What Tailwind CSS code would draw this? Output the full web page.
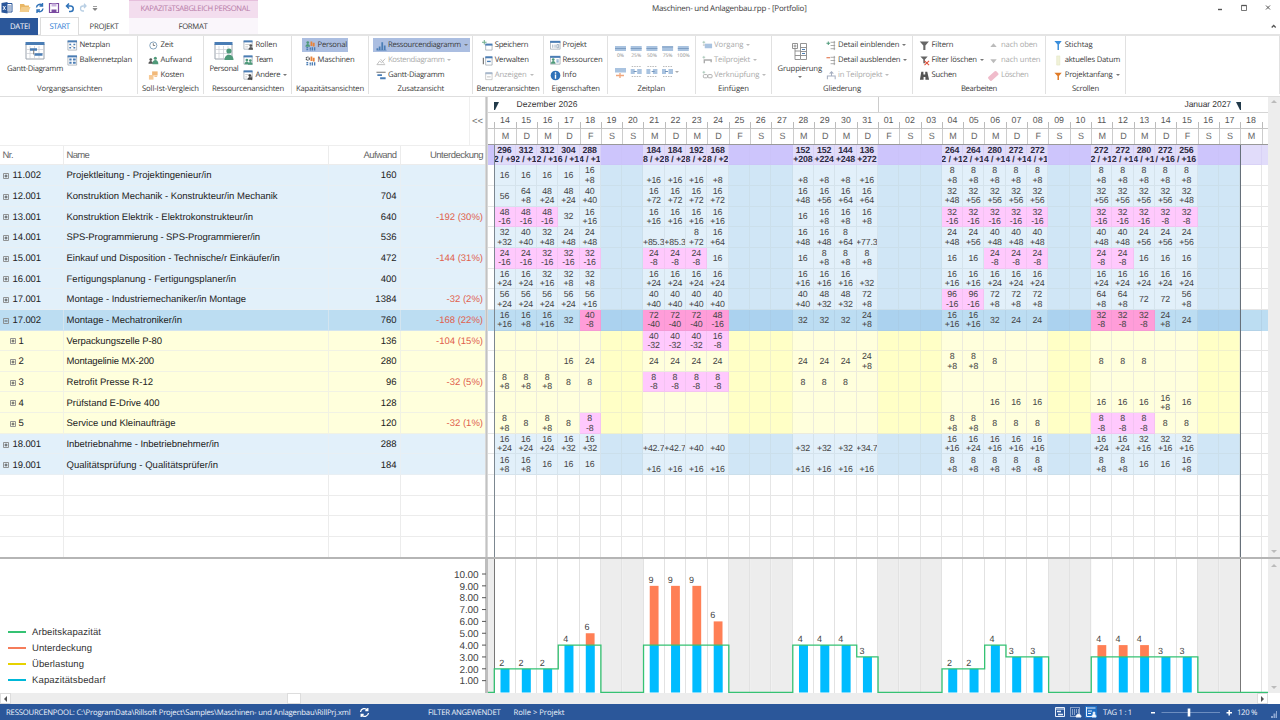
<!DOCTYPE html>
<html lang="de">
<head>
<meta charset="utf-8">
<title>Maschinen- und Anlagenbau.rpp - [Portfolio]</title>
<script src="https://cdn.jsdelivr.net/npm/@tailwindcss/browser@4"></script>
</head>
<body class="w-[1280px] h-[720px] overflow-hidden bg-white">
<div class="w-[1280px] h-[720px] flex flex-col overflow-hidden font-['Open_Sans','Noto_Sans',sans-serif] text-[7.7px] leading-none text-[#3c3c3c] whitespace-nowrap [text-rendering:geometricPrecision]">

  <!-- title bar and tabs -->
  <header class="h-9 shrink-0 flex border-b-2 border-[#e4e4e4] [&_[data-w]]:inline-block [&_[data-w]]:pt-[3px]">
    <div class="w-[129px] shrink-0 flex flex-col">
      <div class="h-[18px] flex items-center pl-[1px] pb-[2px]" id="quick"></div>
      <div class="h-4 flex items-center">
        <div class="w-[38px] h-[17px] bg-[#2b579a] text-white flex items-center pl-[10px]"><span data-w="20">DATEI</span></div>
        <div class="ml-[2px] w-[39px] h-[18px] bg-white border border-b-0 border-[#dcdcdc] flex items-center pl-[8.5px] pb-px text-[#2b7cd3] relative"><span data-w="20">START</span></div>
        <div class="ml-[10.5px]"><span data-w="29">PROJEKT</span></div>
      </div>
    </div>
    <div class="w-[129px] shrink-0 flex flex-col bg-[#faf6fb]">
      <div class="h-[18px] bg-[#f3ddee] border-t border-[#e6bfdc] flex items-center pb-[2px] pl-[11.5px] text-[#b67aa6]"><span data-w="109.5">KAPAZITäTSABGLEICH PERSONAL</span></div>
      <div class="h-4 flex items-center pl-[49.5px]"><span data-w="29">FORMAT</span></div>
    </div>
    <div class="flex-1 flex pl-[394px]">
      <div class="pt-[2px] text-[8px]"><span data-w="154.5" data-s="8">Maschinen- und Anlagenbau.rpp - [Portfolio]</span></div>
      <svg class="ml-auto w-[80px] h-[34px]" viewBox="0 0 80 34" fill="none" stroke="#555">
        <path d="M18 9.500h4" stroke-width="1.400"/><path d="M41.500 5.500h5v5h-5z" stroke-width=".8"/><path d="M41.500 5.500h5" stroke-width="1.300"/><path d="M66 5.500l4 4m0-4l-4 4" stroke-width="1"/><path d="M71.700 27.500l2-2 2 2" stroke-width="1.300"/>
      </svg>
    </div>
  </header>

  <!-- ribbon -->
  <section id="ribbon" class="h-[60px] shrink-0 flex [&_[data-w]]:inline-block [&_[data-w]]:pt-[3px]"></section>

  <!-- table and calendar -->
  <main class="h-[461px] shrink-0 flex border-t border-[#dedede] font-['Liberation_Sans',Arial,sans-serif]">
    <div class="w-[485px] shrink-0 flex flex-col text-[9.5px]" id="table">
      <div class="h-[47.600px] shrink-0 flex justify-end"><div class="w-4 pt-[2px] border-l border-[#efefef] flex items-center justify-center text-[9.5px] text-[#666]">&lt;&lt;</div></div>
    </div>
    <div class="w-[3px] shrink-0 bg-[#c2c2c2] border-x border-[#d8d8d8]"></div>
    <div class="flex-1 flex overflow-hidden">
      <div class="w-[780px] shrink-0 flex flex-col overflow-hidden relative" id="cal"></div>
      <div class="w-3 bg-[#ededed] flex flex-col justify-between items-center py-[2px]"><span class="w-0 h-0 mt-[1px] border-x-[3px] border-x-transparent border-b-[3px] border-b-[#bbb]"></span><span class="w-0 h-0 mb-[2px] border-x-[3px] border-x-transparent border-t-[3px] border-t-[#bbb]"></span></div>
    </div>
  </main>
  <div class="h-[2px] shrink-0 bg-[#b5b5b5]"></div>

  <!-- load chart -->
  <section class="h-[134px] shrink-0 flex font-['Liberation_Sans',Arial,sans-serif]">
    <div class="w-[440px] shrink-0 pt-[65px] pl-2 text-[9.5px] text-[#333] [&_[data-w]]:pt-[2px]" id="legend"></div>
    <svg class="w-[828px] h-[134px] shrink-0" viewBox="440 559 828 134" id="chart"></svg>
    <div class="w-3 bg-[#ededed] flex flex-col justify-between items-center py-[4px]"><span class="w-0 h-0 mt-[1px] border-x-[3px] border-x-transparent border-b-[3px] border-b-[#bbb]"></span><span class="w-0 h-0 border-x-[3px] border-x-transparent border-t-[3px] border-t-[#bbb]"></span></div>
  </section>
  <div class="h-[11px] shrink-0 flex bg-[#ededed]">
    <div class="w-[11px] bg-white flex items-center justify-center border border-[#ddd]"><span class="w-0 h-0 border-y-[3px] border-y-transparent border-r-[3px] border-r-[#555]"></span></div>
    <div class="ml-[276px] w-[14px] bg-white border border-[#ddd]"></div>
    <div class="ml-auto w-[11px] bg-white flex items-center justify-center border border-[#ddd]"><span class="w-0 h-0 border-y-[3px] border-y-transparent border-l-[3px] border-l-[#555]"></span></div>
    <div class="w-3 bg-white"></div>
  </div>

  <!-- status bar -->
  <footer class="h-4 shrink-0 bg-[#2b579a] text-[#eef3fb] flex items-center text-[7.7px] [&_[data-w]]:inline-block [&_[data-w]]:pt-[3px]">
    <span class="ml-[6px] w-[353px] shrink-0"><span data-w="345">RESSOURCENPOOL: C:\ProgramData\Rillsoft Project\Samples\Maschinen- und Anlagenbau\RillPrj.xml</span></span>
    <svg class="w-[11px] h-[11px] shrink-0" viewBox="0 0 11 11" fill="none" stroke="#fff" stroke-width="1.300"><path d="M1.500 5a4 4 0 0 1 7-2M9.500 6a4 4 0 0 1-7 2M8.800 1v2.500H6.300M2.200 10V7.500h2.500"/></svg>
    <span class="ml-[58px] w-[85.500px] shrink-0"><span data-w="72.5">FILTER ANGEWENDET</span></span>
    <span data-w="51">Rolle &gt; Projekt</span>
    <svg class="ml-auto w-[46px] h-4 shrink-0" viewBox="0 0 46 16" fill="none" stroke="#e8effa">
      <path d="M1.500 3.500h9v9h-9zM1.500 5h9" /><path d="M3 7.500h4M4 10.500h5" stroke-width="1.300"/>
      <path d="M16.500 3.500h9v9h-9z" stroke-dasharray="1 1"/><path d="M18 6h7M18 8h7M18 10h4" stroke-dasharray="1 1"/><path d="M22 13c0-4 5-4 5 0z" fill="#fff"/>
      <path d="M31 2h12v12H31z" fill="#1f6fc4" stroke="none"/><path d="M32.500 3v9.500h7M32.500 4h9M34 7h4M34 9.500h3"/><path d="M38 13c0-4 4-4 4 0z" fill="#fff"/><circle cx="40" cy="9" r="1" fill="#fff"/>
    </svg>
    <span class="ml-[3px] w-[48px] shrink-0"><span data-w="29">TAG 1 : 1</span></span>
    <svg class="w-[84px] h-4 shrink-0" viewBox="1151 704 84 16" stroke="#fff"><path d="M1149.500 712.700h5.500M1226.500 712.700h5.500M1229.200 710v5.500" stroke-width="1.500"/><path d="M1161.500 712.500h58.500" stroke="#7f9cca" stroke-width=".8"/><path d="M1189 708.500v8" stroke-width="2.600"/></svg>
    <span class="ml-[2px] w-[30px] shrink-0"><span data-w="20">120 %</span></span>
    <svg class="w-[13px] h-4 shrink-0" viewBox="0 0 13 16" fill="#8ea9d3"><path d="M4 12h2v2H4zM6.500 9.500h2v4.500h-2zM9 7h1v7H9z"/></svg>
  </footer>
</div>

<script>
const B='#4a7db5', GR='#4f9a7a', OR='#e8833a';
const svg=(s,vb='0 0 12 12',cls='w-[11px] h-[11px] shrink-0')=>`<svg class="${cls}" viewBox="${vb}" fill="none">${s}</svg>`;
const win=(x,y,w,h,c=B,st='#9aa3ad')=>`<path d="M${x} ${y}h${w}v${h}h-${w}z" fill="#fff" stroke="${st}" stroke-width=".8"/><path d="M${x-.4} ${y}h${w+.8}" stroke="${c}" stroke-width="2.200"/>`;
const man=(x,y,c)=>`<circle cx="${x}" cy="${y}" r="1.500" fill="${c}"/><path d="M${x-2.5} ${y+4.5}c0-4 5-4 5 0z" fill="${c}"/>`;
const capBase=`<path d="M7 1.500v5M9.500 3v4" stroke="${OR}" stroke-width="2"/><path d="M1.500 8.500h2M1.500 10.500h2M5 9h1.500M5 10.800h1.500M8 8v3.500M10.500 8v3.500" stroke="${B}" stroke-width="1.500"/>`;
const ic={
 net:win(1,1.500,9.500,9.500)+`<path d="M2.500 5h2M7 5h2M2.500 8.500h2M7 8.500h2" stroke="${B}" stroke-width="1.600"/><path d="M4.500 6.500l3 1" stroke="#999" stroke-width=".6"/>`,
 bal:win(1,1.500,9.500,9.500)+`<path d="M2.500 5h2.500M6.500 5h3M2.500 8.500h2.500M6.500 8.500h3" stroke="${B}" stroke-width="2.200"/>`,
 clock:`<circle cx="5.800" cy="6" r="3.900" stroke="#7d9cb8" stroke-width="1"/><path d="M5.800 3.500V6h2" stroke="#555" stroke-width=".8"/>`,
 auf:man(3,5,'#555')+`<circle cx="8" cy="3.500" r="1.700" fill="${GR}"/><path d="M4.800 10c0-6 6.500-6 6.500 0z" fill="${GR}"/>`,
 cost:`<path d="M4.500 1.500h6v4.500h-6z" fill="#f2b979"/><path d="M1 5.500h5v5H1z" fill="#f6c995"/><path d="M7 7h3" stroke="#f2b979"/>`,
 rol:win(1,1.500,9,8.500)+`<path d="M2.500 5h5M2.500 7.500h3" stroke="#aaa" stroke-width=".7"/>`+man(8.500,6,'#555'),
 team:win(1,1.500,9,8.500)+man(4.200,5.500,GR)+man(8,6,GR),
 oth:win(1,1.500,9,8.500)+`<path d="M2.500 5h5M2.500 7.500h2" stroke="#aaa" stroke-width=".7"/>`+man(7.500,6,'#444')+`<path d="M9.500 7v4" stroke="#444"/>`,
 capP:man(3,2.800,GR)+capBase,
 capM:`<circle cx="3" cy="4" r="1.700" stroke="#555" stroke-width="1.400" stroke-dasharray="1.2 .5"/>`+capBase,
 bars:`<path d="M1.500 9v2M4 7v4M6.800 2.500v8.500M9.500 6v5" stroke="${B}" stroke-width="1.900"/><path d="M.5 11.200h11" stroke="${B}" stroke-width=".7"/>`,
 kd:`<path d="M1 10.500l3-4 2 2 4-4.500M5 4.500l4 5M1 10.500h9" stroke="#bbb" stroke-width="1"/>`,
 gd:`<path d="M.5 2.500h10" stroke="#888" stroke-width="1.300"/><path d="M1.500 5.500h5M4.500 9h6" stroke="${B}" stroke-width="2"/>`,
 save:`<path d="M2.500 0v5M0 2.500h5" stroke="#6fae8d" stroke-width="1.100"/>`+win(4,5,7,6),
 adm:win(4,2.500,7,8.500)+`<path d="M1.500 3v7" stroke="#777" stroke-width="1.300"/><path d="M5.500 7h4" stroke="${B}" stroke-width="1.500"/>`,
 show:win(4,3.500,7,7,'#a8b8cc','#bbb')+`<path d="M5.500 7.500h4" stroke="#bbb"/>`,
 prj:win(.5,2,10.500,8)+`<path d="M3 5v3.500M5.500 5v3.500M7.500 5h2v3.500h-2z" stroke="#9ab" stroke-width="1"/>`,
 res:win(.5,2,10.500,8)+man(3.500,5,GR)+`<path d="M7 5.500h2.500M7 7.500h2.500" stroke="${B}" stroke-width="1"/>`,
 info:`<circle cx="6" cy="6" r="5.300" fill="#2f72b8"/><path d="M6 2.500v1.500M6 5v4.500" stroke="#fff" stroke-width="1.500"/>`,
 vor:`<path d="M2 1v3M.5 2.500h3" stroke="#9cbfae" stroke-width=".8"/><path d="M3 4h8v5H3z" fill="#a9c3e0"/><path d="M1 5.500h2" stroke="#aaa"/>`,
 tp:`<path d="M2 1v3M.5 2.500h3" stroke="#9cbfae" stroke-width=".8"/><path d="M2.500 9V5.500H10V8" stroke="#aaa" stroke-width="1.500"/>`,
 vk:`<path d="M2 1v3M.5 2.500h3" stroke="#9cbfae" stroke-width=".8"/><rect x="1.500" y="5" width="4.500" height="3.500" rx="1" stroke="#aaa"/><rect x="6.500" y="5" width="4.500" height="3.500" rx="1" stroke="#aaa"/>`,
 exp:`<path d="M2.500 1.500v4M.5 3.500h4" stroke="#4f9a7a" stroke-width="1.100"/><path d="M9 1v10M5 2.500h5M5 6h5M5 9.500h5" stroke="#999" stroke-width=".9"/>`,
 col:`<path d="M.5 3h4" stroke="#e0663a" stroke-width="1.100"/><path d="M9 1v10M5 2.500h5M5 6h5M5 9.500h5" stroke="#999" stroke-width=".9"/>`,
 inT:`<path d="M1.500 10V6.500H10V10M4 4l2-2 2 2M6 2v4.500" stroke="#a5aec0" stroke-width="1.100"/>`,
 fil:`<path d="M.8 1.500h10L7 6v5H4.700V6z" fill="#666"/>`,
 filx:`<path d="M1.500 1.500h8L6.500 5v4H4.700V5z" fill="#666"/><path d="M6 6.500l5 4.500m0-4.500l-5 4.500" stroke="#e0503a" stroke-width="1.200"/>`,
 find:`<path d="M2.500 2h2.300v3h2V2H9l2 8.500H7V7.500H5v3H1z" fill="#555"/>`,
 up:`<path d="M2.500 7.500L6 3.500l3.500 4z" fill="#bbb"/>`,
 dn:`<path d="M2.500 4.500L6 9l3.500-4.500z" fill="#bbb"/>`,
 del:`<rect x="-.5" y="3.500" width="12" height="5.500" rx="1.500" fill="#f0bccb" transform="rotate(-42 6 6)"/>`,
 pinB:`<path d="M1.500 1h8L6.500 5v6h-1.600V5z" fill="#3a8edb"/>`,
 bar:`<path d="M4 1h3.500v10H4z" fill="#f0f2d8" stroke="#dfe2bd" stroke-width=".5"/>`,
 pinO:`<path d="M1.500 3h8L6.500 6.500V11h-1.600V6.500z" fill="#e07b28"/>`,
};
const dd=(ml,c)=>`<span class="w-0 h-0 border-x-2 border-x-transparent border-t-2 ${c}" style="margin-left:${ml}px"></span>`;
// item: [icon, label, label width, grey, arrow gap, highlight width]
const item=([i,t,w,g,a,hl],iw)=>`<div class="h-[15px] flex items-center ${g?'text-[#aaa]':''}"><div class="h-[14px] flex items-center ${hl?'bg-[#abbee1] -ml-[3px] pl-[3px]':''}" ${hl?`style="width:${hl}px"`:''}><span class="flex shrink-0 pt-px" style="width:${iw}px">${svg(ic[i])}</span><span data-w="${w}">${t}</span>${a?dd(a,g?'border-t-[#bbb]':'border-t-[#777]'):''}</div></div>`;
const col=(pl,iw,items)=>`<div class="flex flex-col" style="padding-left:${pl}px">${items.map(x=>item(x,iw)).join('')}</div>`;
const group=(w,label,lx,lw,body)=>`<div class="h-[58px] shrink-0 border-r border-[#e1e1e1] flex flex-col" style="width:${w}px"><div class="h-[48px] pt-[1px] flex">${body}</div><div class="flex" style="padding-left:${lx}px"><span data-w="${lw}">${label}</span></div></div>`;
const big=(pl,w,icon,label,arrow)=>`<div class="flex flex-col items-center pt-[4px] shrink-0" style="margin-left:${pl}px;width:${w}px">${icon}<span class="mt-[2px]" data-w="${w}">${label}</span>${arrow?'<span class="mt-[2px] w-0 h-0 border-x-2 border-x-transparent border-t-2 border-t-[#777]"></span>':''}</div>`;
const bic='w-5 h-5 shrink-0';
const gantt=svg(`<path d="M1 3h18v15H1z" fill="#fff" stroke="#9aa3ad"/><path d="M5 5v13M9.500 5v13M14 5v13M1 8.500h18M1 12.500h18" stroke="#c8ccd2" stroke-width=".7"/><path d="M.5 2.500h19" stroke="${B}" stroke-width="3"/><path d="M5 8.500h7M9.500 13.500h8" stroke="${B}" stroke-width="2.600"/><path d="M8.500 9v4.500" stroke="#777" stroke-width=".8"/>`,'0 0 20 20',bic);
const pers=svg(`<path d="M1 3h17v15H1z" fill="#fff" stroke="#9aa3ad"/><path d="M5 5v13M9.500 5v13M14 5v13M1 8.500h18M1 12.500h13" stroke="#c8ccd2" stroke-width=".7"/><path d="M.5 2.500h18" stroke="${B}" stroke-width="3"/><circle cx="15" cy="10" r="2.600" fill="${GR}"/><path d="M10.500 19c0-7 9-7 9 0z" fill="${GR}"/>`,'0 0 20 20',bic);
const grp=svg(`<path d="M2.500 2.500h5v5h-5zM5 3.500v3M3.500 5h3M5 7.500v11h5M10.500 2.500h6v16h-6zM10.500 6.500h6M10.500 10.500h6M10.500 14.500h6M5 10h5M5 14.500h5" stroke="#888" stroke-width=".9"/><path d="M12 8.500h3M12 12.500h3" stroke="${B}"/>`,'0 0 20 20',bic);
let zp='';
['0%','25%','50%','75%','100%'].forEach((t,i)=>{const x=7+i*15.7;zp+=`<path d="M${x} 9h11v5h-11z" fill="#a9c3e0"/><path d="M${x} ${i==3?10:11.5}h11" stroke="#7394bb" stroke-width=".8"/><text x="${x+5.5}" y="20" font-size="5" text-anchor="middle" fill="#888">${t}</text>`});
zp+=`<path d="M7 31h11v4.500H7z" fill="#a9c3e0"/><path d="M8 38.500h8M12 36v5" stroke="#f0a77e" stroke-width="1.300"/>`;
[22.7,38.4,54].forEach((x,i)=>{zp+=`<path d="M${x} 32h4v5h-4zM${x+6.500} 32h4.500v5h-4.500z" fill="#a9c3e0"/><path d="M${x+1} 29.500h9M${x+1} 39.500h9" stroke="#bbb" stroke-width="1" stroke-dasharray="1.500 1"/><path d="M${x+(i==1?5.2:3)} 34.500h3" stroke="#7394bb"/>`});
zp+=`<path d="M67 34h4l-2 2z" fill="#aaa"/>`;
document.getElementById('ribbon').innerHTML=
 group(138,'Vorgangsansichten',37,65.500,big(7,56,gantt,'Gantt-Diagramm')+col(3.500,13,[['net','Netzplan',30.500],['bal','Balkennetzplan',52.500]]))+
 group(66,'Soll-Ist-Vergleich',4,57,col(10,12.500,[['clock','Zeit',13],['auf','Aufwand',31.500],['cost','Kosten',23.500]]))+
 group(88,'Ressourcenansichten',8,72,big(5.500,29,pers,'Personal')+col(4.500,12.500,[['rol','Rollen',21.500],['team','Team',17],['oth','Andere',25,0,3]]))+
 group(76.5,'Kapazitätsansichten',4,68,col(13,12.500,[['capP','Personal',29.500,0,0,46],['capM','Maschinen',37]]))+
 group(104,'Zusatzansicht',29,46.500,col(7,12.500,[['bars','Ressourcendiagramm',73,0,3,97],['kd','Kostendiagramm',56.500,1,3],['gd','Gantt-Diagramm',56.500]]))+
 group(71,'Benutzeransichten',4,63,col(9.500,12.700,[['save','Speichern',33.500],['adm','Verwalten',34],['show','Anzeigen',32,1,3]]))+
 group(64,'Eigenschaften',8,48.500,col(6.500,12.500,[['prj','Projekt',24],['res','Ressourcen',40],['info','Info',14]]))+
 group(88,'Zeitplan',30,27.500,`<svg class="w-[87px] h-[46px]" viewBox="0 0 87 46" fill="none">${zp}</svg>`)+
 group(76,'Einfügen',22.500,31,col(6,12.500,[['vor','Vorgang',29.500,1,3],['tp','Teilprojekt',36,1,3],['vk','Verknüpfung',45.500,1,3]]))+
 group(141,'Gliederung',51.500,38,big(6,44.500,grp,'Gruppierung',1)+col(3.500,12.500,[['exp','Detail einblenden',61.500,0,3],['col','Detail ausblenden',62.500,0,3],['inT','in Teilprojekt',44.500,1,3]]))+
 group(133,'Bearbeiten',48.500,36,`<div class="w-[74px] shrink-0">${col(6,13,[['fil','Filtern',22],['filx','Filter löschen',45.500,0,3],['find','Suchen',25]])}</div>`+col(1,13.500,[['up','nach oben',36.500,1],['dn','nach unten',39.500,1],['del','Löschen',27.500,1]]))+
 group(80,'Scrollen',26.500,27,col(7,12.200,[['pinB','Stichtag',28],['bar','aktuelles Datum',55.500],['pinO','Projektanfang',48,0,3]]))+
 `<div class="flex-1 h-[58px] border-r border-[#e1e1e1]"></div>`;

document.getElementById('quick').innerHTML=`<svg class="w-[104px] h-4" viewBox="1 0 104 16" fill="none">
<path d="M5.500 3.500h6.500v8.500H5.500z" stroke="#2b579a"/><path d="M8 6h3M8 8h3M8 10h3" stroke="#2b579a" stroke-width=".8"/><path d="M1.500 3l6-1v11.500l-6-1z" fill="#2b579a"/><path d="M3 6l2.500 4M5.500 6L3 10" stroke="#fff" stroke-width=".9"/>
<path d="M20 12V4h4l1 1.500h4V12z" fill="#e9b765"/><path d="M19.500 12l2-5h9l-2 5z" fill="#f3cd8b"/>
<path d="M36.500 7.500a3.500 3.500 0 0 1 5.500-2.500M43 8.500a3.500 3.500 0 0 1-5.500 2.500M42.500 3v3h-3M37 13v-3h3" stroke="#2f72b8" stroke-width="1.400"/>
<path d="M49.500 3.500h9v9h-9z" fill="#fff" stroke="#7b4aa0" stroke-width="1.200"/><path d="M51.500 3.500h5v3h-5z" fill="#c9b3dc"/><path d="M51.500 9.500h5v3h-5z" fill="#7b4aa0"/>
<path d="M67 6h3.500a2.700 2.700 0 0 1 0 5.500H69M69 3.500L66.500 6 69 8.500" stroke="#2f72b8" stroke-width="1.500"/>
<path d="M86 6h-3a2.500 2.500 0 0 0 0 5h1M84 3.800L86 6l-2 2" stroke="#b9cfe4" stroke-width="1.300"/>
<path d="M93 6.500h4M93 8.500h4l-2 2z" stroke="#777" stroke-width=".7" fill="#777"/></svg>`;

// resource rows: nr, name, name width, effort, shortage, kind, values of the 23 working days
const rows=[
['11.002','Projektleitung - Projektingenieur/in',145,'160','','b','16*4 16,+8 ,+16*3 ,+8 ,+8*3 ,+16 8,+8*10'],
['12.001','Konstruktion Mechanik - Konstrukteur/in Mechanik',211,'704','','b','56 64,+8 48,+24*2 40,+40 16,+72*4 16,+48 16,+56 16,+64*2 32,+48 32,+56*4 32,+56*4 32,+48'],
['13.001','Konstruktion Elektrik - Elektrokonstrukteur/in',186.500,'640','-192 (30%)','b','48,-16*3 32 16,+16 16,+16*4 16 16,+8*3 32,-16*8 32,-8*2'],
['14.001','SPS-Programmierung - SPS-Programmierer/in',193.500,'536','','b','32,+32 40,+40 32,+48 24,+48*2 ,+85.3*2 8,+72 16,+64 16,+48*2 8,+64 ,+77.3 24,+48 24,+56 40,+48*5 24,+56*3'],
['15.001','Einkauf und Disposition - Technische/r Einkäufer/in',213.500,'472','-144 (31%)','b','24,-16*2 32,-16*3 24,-8*3 16*2 8,+8*3 16*2 24,-8*5 16*3'],
['16.001','Fertigungsplanung - Fertigungsplaner/in',169.500,'400','','b','16,+24*2 32,+16 32,+8*2 16,+24*4 16,+16*3 ,+32 16,+16*2 16,+24*8'],
['17.001','Montage - Industriemechaniker/in Montage',179.500,'1384','-32 (2%)','b','56,+24*4 56,+16 40,+40*5 48,+32*2 72,+8 96,-16*2 72,+8*3 64,+8*2 72*2 56,+8'],
['17.002','Montage - Mechatroniker/in',115.500,'760','-168 (22%)','s','16,+16 16,+8 16,+16 32 40,-8 72,-40*3 48,-16 32*3 24,+8 16,+16*2 32 24*2 32,-8*3 24,+8 24'],
['1','Verpackungszelle P-80',95.500,'136','-104 (15%)','y','.*5 40,-32*3 16,-8 .*14'],
['2','Montagelinie MX-200',87.500,'280','','y','.*3 16 24*8 24,+8 8,+8*2 8 .*2 8*3 .*2'],
['3','Retrofit Presse R-12',86.500,'96','-32 (5%)','y','8,+8*3 8*2 8,-8*4 8*3 .*11'],
['4','Prüfstand E-Drive 400',93,'128','','y','.*15 16*6 16,+8 16'],
['5','Service und Kleinaufträge',109,'120','-32 (1%)','y','8,+8 8 8,+8 8 8,-8 .*8 8,+8*2 8*3 8,-8*3 8*2'],
['18.001','Inbetriebnahme - Inbetriebnehmer/in',152.500,'288','','b','16,+24*3 16,+32*2 ,+42.7*2 ,+40*2 ,+32*3 ,+34.7 16,+16 16,+24 16,+16*3 16,+24*2 32,+16*3'],
['19.001','Qualitätsprüfung - Qualitätsprüfer/in',151.500,'184','','b','16,+8*2 16*3 ,+16*8 8,+8*7 16*2 16,+8'],
];
const work=[0,1,2,3,4,7,8,9,10,14,15,16,17,21,22,23,24,25,28,29,30,31,32];
const expand=s=>s.split(' ').flatMap(t=>{const [v,n]=t.split('*');return Array(+(n||1)).fill(v)});
const leftBg={b:'bg-[#e2f0fa] border-[#e8eff4]',s:'bg-[#bcddf2] border-[#d3e4ef]',y:'bg-[#ffffdc] border-[#f1f2e4]',w:'bg-white border-[#ececec]'};
const H='h-[20.660px] shrink-0 flex';
const trow=(k,a,b,c,d,hc)=>`<div class="${H} ${leftBg[k]} ${hc} border-b"><div class="w-[64px] shrink-0 border-r border-inherit flex items-center pt-[2px]">${a}</div><div class="w-[264.500px] shrink-0 border-r border-inherit flex items-center pt-[2px] pl-[2.500px]">${b}</div><div class="w-[72px] shrink-0 border-r border-inherit flex items-center justify-end pt-[2px] pr-[3px]">${c}</div><div class="flex-1 flex items-center justify-end pt-[2px] pr-[2px]">${d}</div></div>`;
let th=trow('w','<span class="pl-[2.500px]" data-w="10.500">Nr.</span>','<span data-w="22.500">Name</span>','<span data-w="33">Aufwand</span>','<span data-w="53">Unterdeckung</span>','text-[#666] border-t border-t-[#eee]');
rows.forEach(r=>{
 const sub=r[0].length<3;
 const pm=`<svg class="w-[6px] h-[6px] shrink-0 ${sub?'ml-[10px]':'ml-[3px]'}" viewBox="0 0 6 6" fill="none" stroke="#555"><path d="M.5 .5h5v5h-5z" stroke="#888" stroke-width=".9"/><path d="${r[0]=='17.002'?'M1.500 3h3':'M1.500 3h3M3 1.500v3'}" stroke-width="1"/></svg>`;
 th+=trow(r[5],pm+`<span class="${sub?'ml-[2.500px]':'ml-[3.500px]'}" ${sub?'':'data-w="28.5"'}>${r[0]}</span>`,`<span data-w="${r[2]}">${r[1]}</span>`,r[3],`<span class="text-[#e0604c]">${r[4]}</span>`,'text-[#222]');
});
for(let i=0;i<4;i++)th+=trow('w','','','','','');
document.getElementById('table').insertAdjacentHTML('beforeend',th);

// calendar
const C='w-[21.320px] shrink-0';
const days=[...Array(18)].map((_,i)=>14+i).concat([...Array(18)].map((_,i)=>1+i));
const dn='MDMDFSS';
let ch=`<div class="h-[15.600px] shrink-0 flex items-center text-[8.500px] text-[#333] border-b border-[#d5d5d5]"><div class="w-[390.500px] h-full flex items-center border-r border-[#ccc]"><svg class="ml-[6px] mt-[4px] w-[5px] h-[8px]" viewBox="0 0 5 8"><path d="M0 0h5L1 8H0z" fill="#223a4a"/></svg><span class="ml-[17.500px]" data-w="61" data-s="8.5">Dezember 2026</span></div><span class="ml-[306px]" data-w="46.500" data-s="8.5">Januar 2027</span><svg class="ml-[5px] mt-[4px] w-[5px] h-[8px]" viewBox="0 0 5 8"><path d="M0 0h5v8H4z" fill="#223a4a"/></svg></div>`;
ch+=`<div class="h-4 shrink-0 flex text-[8.800px] text-[#555] border-b border-[#c4c4c4] pl-[6.300px]">`+days.map(d=>`<div class="${C} flex items-center justify-center relative"><span class="absolute left-0 bottom-0 w-px h-[6px] bg-[#bbb]"></span>${String(d).padStart(2,'0')}</div>`).join('')+`<div class="w-px h-[6px] self-end bg-[#bbb]"></div></div>`;
ch+=`<div class="h-4 shrink-0 flex text-[9px] text-[#666] border-b border-[#999] pl-[6.300px]">`+days.map((d,i)=>`<div class="${C} flex items-center justify-center border-l border-[#ccc] pt-px">${dn[i%7]}</div>`).join('')+`<div class="flex-1 border-l border-[#ccc]"></div></div>`;
const cellBg={b:['bg-[#e2f0fa] border-[#d5e3ec]','bg-[#d0e6f6] border-[#cbdfeb]'],s:['bg-[#bcddf2] border-[#b3d2e7]','bg-[#abd2ef] border-[#a9cde8]'],y:['bg-[#ffffdc] border-[#ecebdc]','bg-[#ffffc6] border-[#f0f0cb]'],w:['bg-white border-[#e6e6e6]','bg-white border-[#e6e6e6]'],h:['bg-[#e1dcfa] border-[#d9d2f6]','bg-[#cdc5fc] border-[#cbc3f9]']};
const crow=(k,vals)=>{
 let h=`<div class="${H} ${k=='h'?'font-bold text-[#2c2940]':'text-[#444]'} text-[8.800px] tracking-[-0.15px] leading-[9.400px]"><div class="w-[6.300px] shrink-0 ${k=='s'?'bg-[#bcddf2]':k=='h'?'bg-[#cdc5fc]':'bg-white border-b border-[#e6e6e6]'}"></div>`;
 for(let c=0;c<36;c++){
  const w=work.indexOf(c), v=w<0?'':(vals[w]||''), [a,b]=v==='.'?['']:v.split(',');
  let bg=cellBg[k][w<0?1:0];
  if(c==35)bg=k=='s'||k=='h'?cellBg[k][0]:cellBg.w[0];
  if(b&&b[0]=='-')bg=k=='s'?'bg-[#ff9dd9] border-[#f59ad4]':'bg-[#ffc9fd] border-[#f3c3f2]';
  h+=`<div class="${C} ${bg} border-r border-b pt-[1.500px] flex flex-col items-center justify-center overflow-hidden"><span>${a||(b?'&nbsp;':'')}</span>${b?`<span>${b.replace(/_/g,' ')}</span>`:''}</div>`;
 }
 return h+`<div class="flex-1 ${k=='s'?'bg-[#bcddf2]':k=='h'?'bg-[#e1dcfa]':'bg-white border-b border-[#e6e6e6]'}"></div></div>`;
};
ch+=crow('h',expand('296,2_/_+9 312,2_/_+1 312,2_/_+1 304,6_/_+1 288,4_/_+1 184,8_/_+2 184,8_/_+2 192,8_/_+2 168,8_/_+2 152,+208 152,+224 144,+248 136,+272 264,2_/_+1 264,2_/_+1 280,4_/_+1 272,4_/_+1 272,4_/_+1 272,2_/_+1 272,2_/_+1 280,4_/_+1 272,/_+16 256,/_+16'));
rows.forEach(r=>ch+=crow(r[5],expand(r[6])));
for(let i=0;i<4;i++)ch+=crow('w',[]);
ch+=`<div class="absolute left-[6px] top-[48px] bottom-0 w-px bg-[#7c8790]"></div><div class="absolute left-[752px] top-[48px] bottom-0 w-px bg-[#66707a]"></div>`;
document.getElementById('cal').innerHTML=ch;

// legend
document.getElementById('legend').innerHTML=[['Arbeitskapazität','bg-[#35c273]',69],['Unterdeckung','bg-[#f57c5a]',60],['Überlastung','bg-[#e6d200]',52],['Kapazitätsbedarf','bg-[#00b8d8]',73.500]].map(([t,c,w])=>`<div class="h-4 flex items-center"><span class="w-[18px] h-[1.500px] mr-[6px] ${c}"></span><span data-w="${w}">${t}</span></div>`).join('');

// chart
const X0=494.300,W=21.320,Y0=692.500,U=11.850;
const cap=Array(36).fill(0), dem=Array(36).fill(0);
[2,2,2,4,4,4,4,4,4,4,4,4,3,2,2,4,3,3,3,3,3,3,3].forEach((v,i)=>cap[work[i]]=v);
[2,2,2,4,5,9,9,9,6,4,4,4,3,2,2,4,3,3,4,4,4,3,3].forEach((v,i)=>dem[work[i]]=v);
let s=`<rect x="488" y="559" width="6.300" height="134" fill="#ededed"/>`;
for(let c=0;c<35;c++)if(!work.includes(c))s+=`<rect x="${X0+c*W}" y="559" width="${W}" height="134" fill="#ededed"/>`;
for(let c=1;c<37;c++)s+=`<path d="M${Math.round(X0+c*W)-.5} 559v134" stroke="#e2e2e2"/>`;
s+=`<path d="M494.500 559V${Y0}M1240.500 559V${Y0}" stroke="#777"/><rect x="485" y="559" width="3" height="134" fill="#bdbdbd"/>`;
const near=[0,3,4,7,14,21,23,28];
let path=`M488 692.300H${X0}`;
for(let c=0;c<36;c++){
 const x=X0+c*W,d=dem[c],k=cap[c];
 if(d){
  s+=`<rect x="${x+6.200}" y="${Y0-Math.min(d,k)*U}" width="9" height="${Math.min(d,k)*U}" fill="#00bcff"/>`;
  if(d>k)s+=`<rect x="${x+6.200}" y="${Y0-d*U}" width="8.800" height="${(d-k)*U}" fill="#ff7f55"/>`;
  s+=`<text x="${x+W/2-(near.includes(c)?3.200:5.300)}" y="${Y0-d*U-3.200}" font-size="9" text-anchor="middle" fill="#444">${c==4?6:d}</text>`;
 }
 path+=`V${Math.min(692.300,Y0-k*U)}H${x+W}`;
}
s+=`<path d="${path}H1268" fill="none" stroke="#35c273" stroke-width="1.300"/>`;
for(let v=1;v<=10;v++){const y=Y0-v*U;s+=`<text x="478.500" y="${y+3.700}" font-size="10" letter-spacing="-.1" text-anchor="end" fill="#444">${v}.00</text><path d="M482 ${y}h4" stroke="#555"/>`}
document.getElementById('chart').innerHTML=s;

// spread each label to its column width; text is measured at 100px and scaled down
const cx=document.createElement('canvas').getContext('2d');
document.querySelectorAll('[data-w]').forEach(e=>{
 const arial=e.closest('main')||e.closest('#legend');
 const size=+(e.dataset.s||(arial?9.5:7.7));
 cx.font='100px '+(arial?'"Liberation Sans"':'"Open Sans"');
 const t=e.textContent, m=cx.measureText(t).width*size/100;
 e.style.letterSpacing=((+e.dataset.w-m)/t.length).toFixed(3)+'px';
});
</script>
</body>
</html>
